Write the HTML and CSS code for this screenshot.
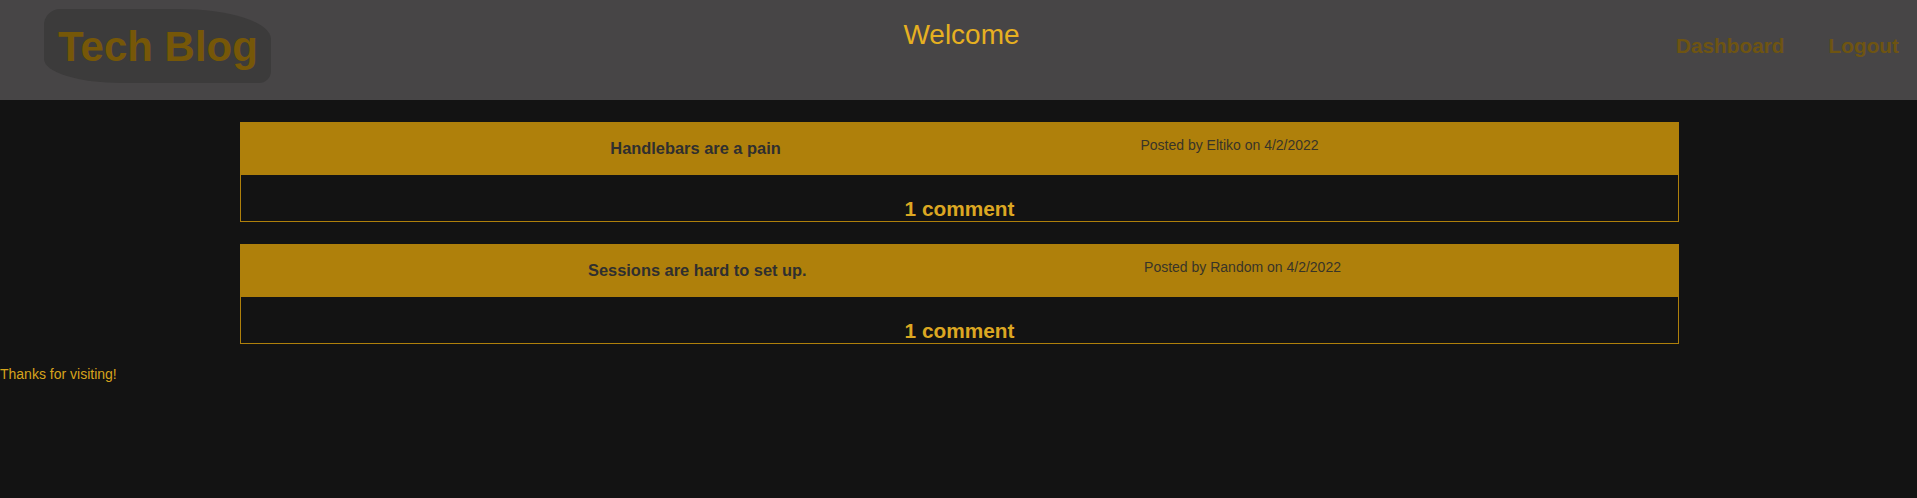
FILE: index.html
```
<!DOCTYPE html>
<html lang="en">
<head>
<meta charset="utf-8">
<title>Tech Blog</title>
<link rel="stylesheet" href="styles.css">
</head>
<body>
<header class="site-header">
  <div class="brand-col">
    <a class="brand" href="#">Tech Blog</a>
  </div>
  <h1 class="welcome">Welcome</h1>
  <nav class="nav">
    <a class="nav-link" href="#">Dashboard</a>
    <a class="nav-link" href="#">Logout</a>
  </nav>
</header>
<main class="posts">
  <article class="post">
    <div class="post-head">
      <h2 class="post-title">Handlebars are a pain</h2>
      <p class="post-meta">Posted by Eltiko on 4/2/2022</p>
    </div>
    <div class="post-body">
      <h3 class="post-comments">1 comment</h3>
    </div>
  </article>
  <article class="post">
    <div class="post-head">
      <h2 class="post-title">Sessions are hard to set up.</h2>
      <p class="post-meta">Posted by Random on 4/2/2022</p>
    </div>
    <div class="post-body">
      <h3 class="post-comments">1 comment</h3>
    </div>
  </article>
</main>
<footer class="site-footer">Thanks for visiting!</footer>
</body>
</html>
```
FILE: styles.css
```
* { box-sizing: border-box; }

html, body {
  margin: 0;
  padding: 0;
}

body {
  background: #131313;
  font-family: "Liberation Sans", Arial, sans-serif;
  color: #dba51f;
}

.site-header {
  height: 100px;
  background: #474546;
  display: grid;
  grid-template-columns: 1fr auto 1fr;
  align-items: start;
}

.brand-col {
  padding: 9px 0 0 44px;
}

.brand {
  display: inline-block;
  background: #3c3b3b;
  color: #765708;
  font-weight: bold;
  font-size: 42px;
  line-height: 48px;
  text-decoration: none;
  padding: 14px 13px 12px 14px;
  border-radius: 16px 92px 12px 78px / 16px 30px 12px 24px;
}

.welcome {
  margin: 0;
  padding: 19px 0 0 6px;
  font-weight: normal;
  font-size: 28px;
  line-height: 32px;
  color: #e6b021;
}

.nav {
  display: flex;
  justify-content: flex-end;
  gap: 44px;
  padding: 34px 18px 0 0;
}

.nav-link {
  color: #6e5412;
  font-weight: bold;
  font-size: 20.8px;
  line-height: 24px;
  text-decoration: none;
}

.posts {
  padding-top: 22px;
  display: flex;
  flex-direction: column;
  gap: 22px;
}

.post {
  box-sizing: content-box;
  width: 75%;
  margin: 0 calc(12.5% - 2px) 0 auto;
  border: 1px solid #af800b;
}

.post-head {
  height: 52px;
  background: #af800b;
  display: flex;
  justify-content: space-evenly;
  padding-left: 10px;
}

.post-title {
  margin: 0 0 2px;
  align-self: center;
  font-size: 16.4px;
  line-height: 19px;
  font-weight: bold;
  color: #2f2f2f;
}

.post-meta {
  margin: 14px 0 0;
  font-size: 14px;
  line-height: 16px;
  color: #383428;
}

.post-body {
  height: 46px;
  padding-top: 22px;
  text-align: center;
}

.post-comments {
  margin: 0;
  font-size: 20.8px;
  line-height: 24px;
  font-weight: bold;
  color: #dca722;
}

.site-footer {
  margin-top: 22px;
  font-size: 14px;
  line-height: 16px;
  color: #d7a41c;
}
```
